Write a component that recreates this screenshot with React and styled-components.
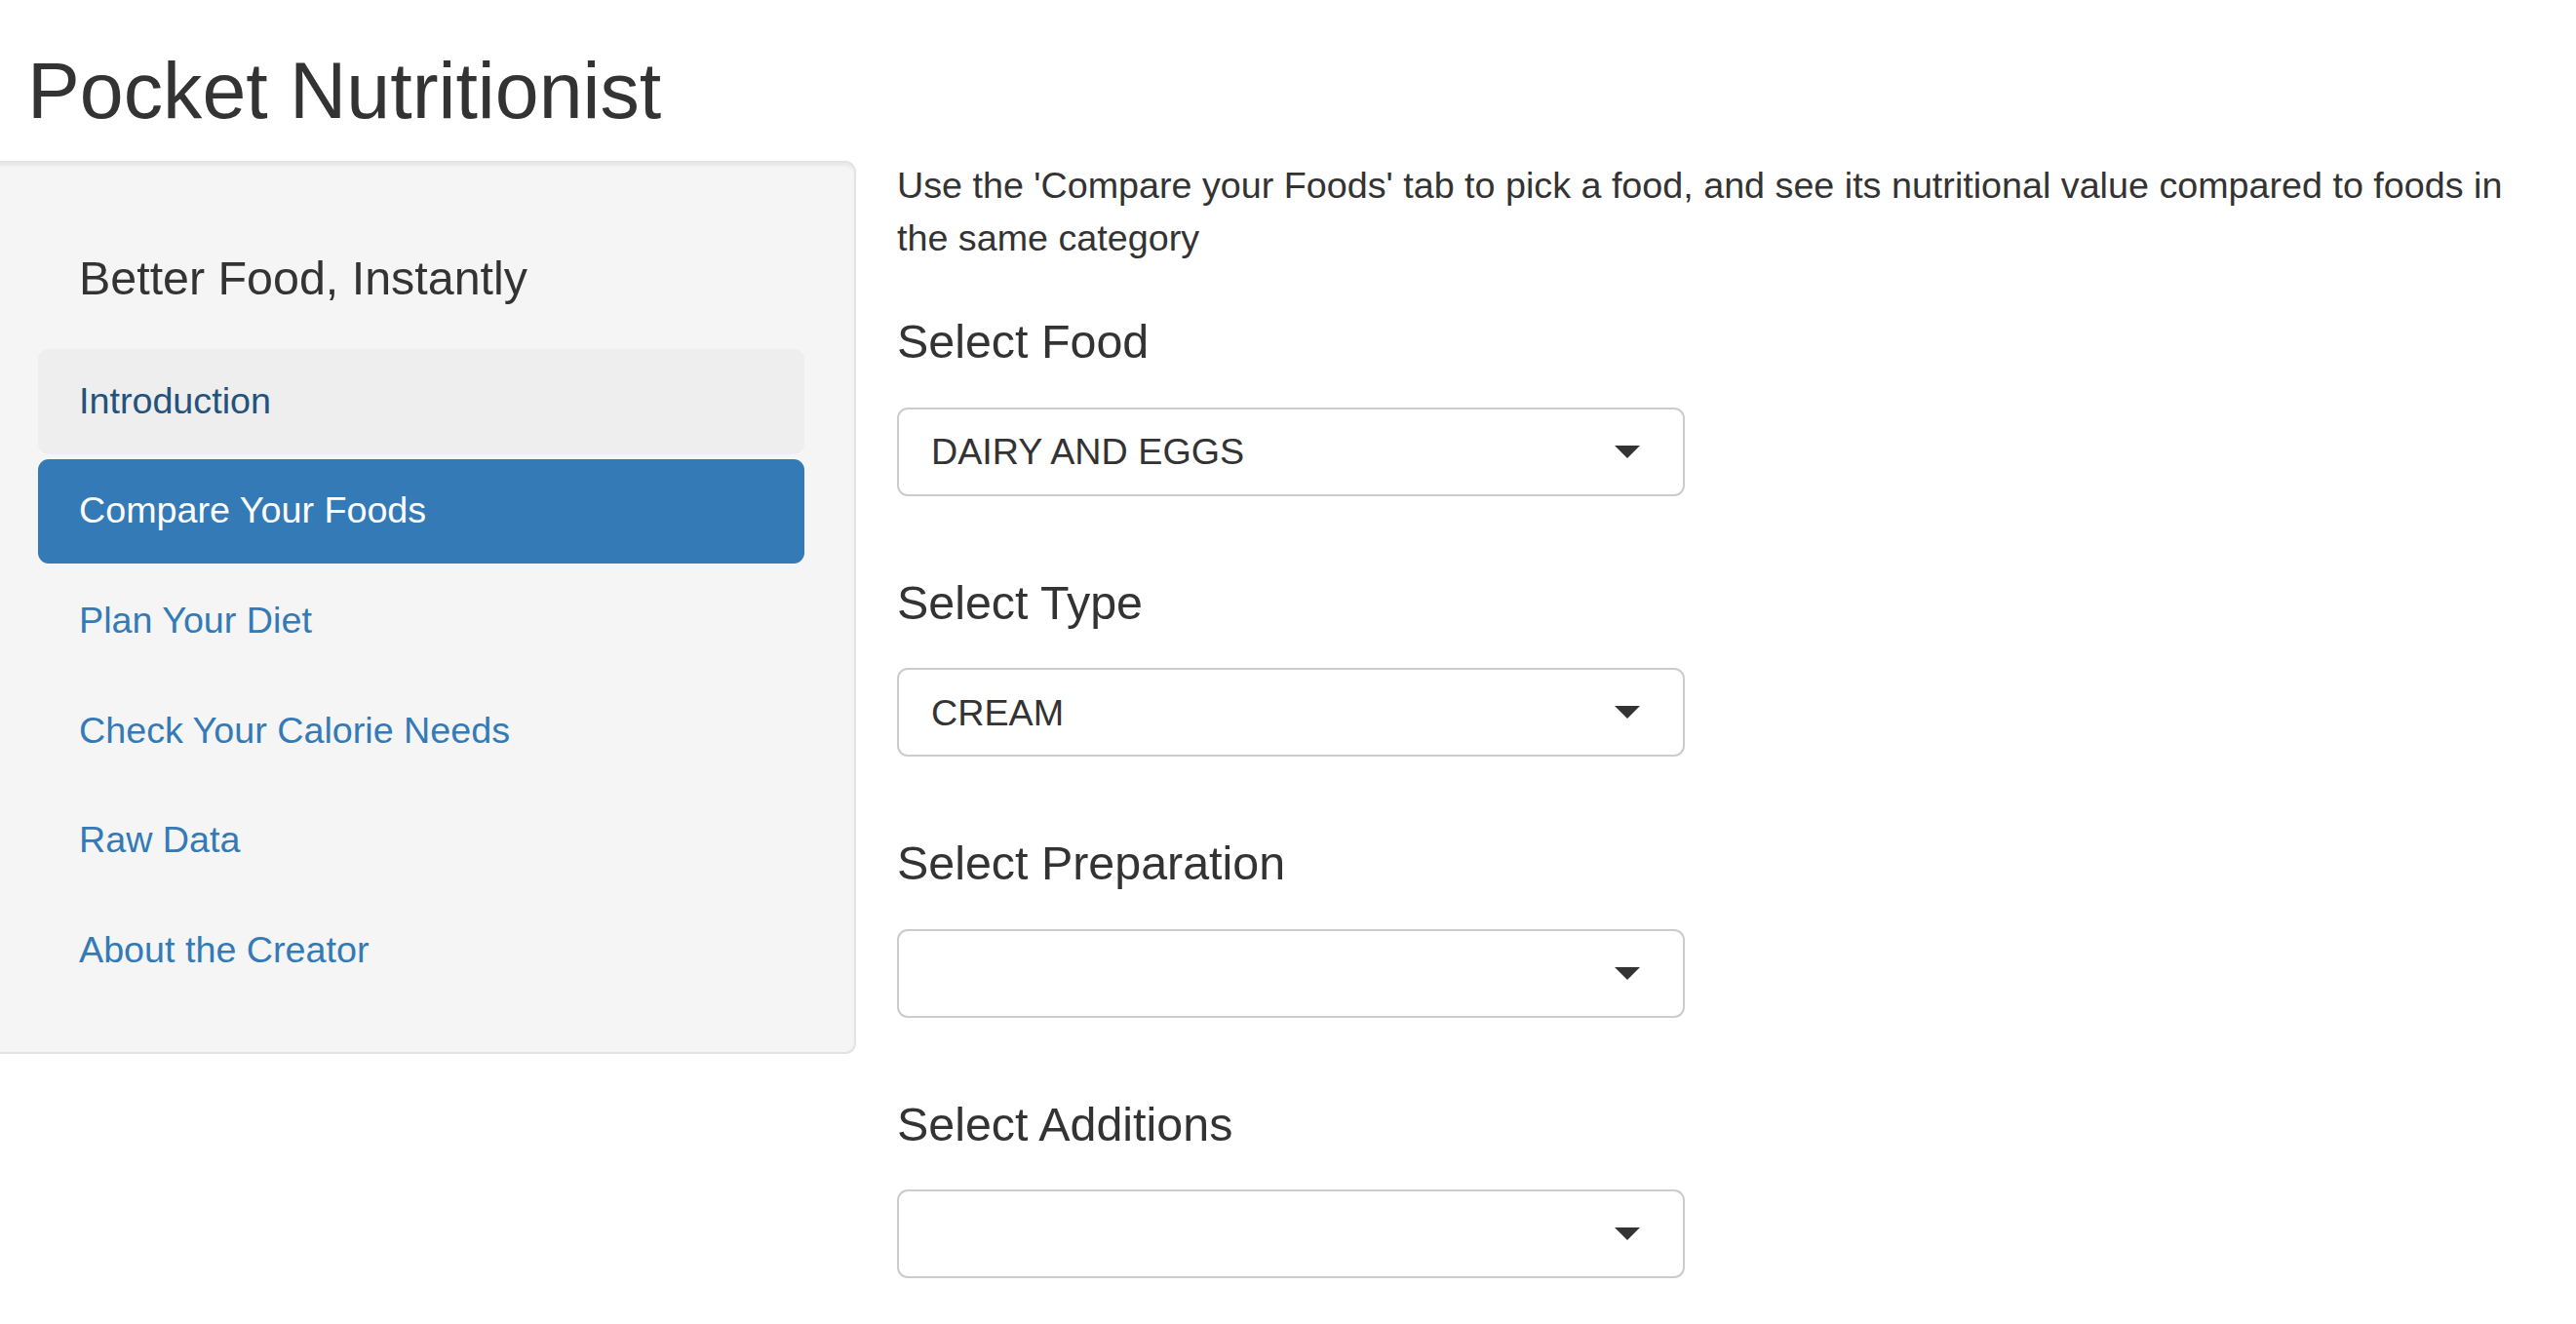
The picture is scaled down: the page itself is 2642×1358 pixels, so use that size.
import React from "react";
import styled, { createGlobalStyle } from "styled-components";

const GlobalStyle = createGlobalStyle`
  html, body {
    margin: 0;
    padding: 0;
    background: #fff;
    overflow: hidden;
  }
  body {
    font-family: "Liberation Sans", Arial, Helvetica, sans-serif;
    color: #333;
  }
  * { box-sizing: border-box; }
`;

const Page = styled.div`
  width: 2642px;
`;

const Title = styled.h2`
  margin: 0;
  padding: 49px 0 0 28px;
  font-size: 80.7px;
  line-height: 1.1;
  font-weight: 500;
`;

const Row = styled.div`
  display: flex;
  align-items: flex-start;
  margin-top: 27px;
`;

const Well = styled.div`
  margin-left: -14px;
  width: 892px;
  flex-shrink: 0;
  padding: 51px;
  background: #f5f5f5;
  border: 2.7px solid #e3e3e3;
  border-radius: 11px;
  box-shadow: inset 0 3px 3px rgba(0, 0, 0, 0.05);
`;

const Tagline = styled.h4`
  margin: 41px 0 46px;
  padding-left: 42px;
  font-size: 48.4px;
  line-height: 1.1;
  font-weight: 500;
`;

const Nav = styled.ul`
  list-style: none;
  margin: 0;
  padding: 0;
  display: flex;
  flex-direction: column;
  gap: 5px;
`;

const Pill = styled.li`
  padding: 26.9px 40px 26.9px 42px;
  font-size: 37.7px;
  line-height: 53.8px;
  border-radius: 11px;
  cursor: pointer;
  color: ${(p) => (p.$active ? "#fff" : p.$hover ? "#23527c" : "#337ab7")};
  background: ${(p) => (p.$active ? "#337ab7" : p.$hover ? "#eee" : "transparent")};
`;

const Main = styled.div`
  margin-left: 42px;
  margin-top: -2px;
  width: 1682px;
  display: flex;
  flex-direction: column;
`;

const Intro = styled.p`
  margin: 0 0 53.6px;
  font-size: 37.7px;
  line-height: 54px;
`;

const Group = styled.div`
  display: flex;
  flex-direction: column;
  & + & {
    margin-top: 83px;
  }
`;

const Label = styled.label`
  display: block;
  font-size: 48.4px;
  line-height: 1.1;
  font-weight: 500;
  margin-bottom: 40.2px;
`;

const SelectBox = styled.div`
  width: 808px;
  height: 91px;
  border: 2.7px solid #ccc;
  border-radius: 11px;
  background: #fff;
  display: flex;
  align-items: center;
  justify-content: space-between;
  padding: 0 44px 0 33px;
  font-size: 37.7px;
  line-height: 54px;
  color: #333;
`;

const Caret = styled.span`
  width: 0;
  height: 0;
  border-style: solid;
  border-width: 13.5px 13.5px 0 13.5px;
  border-color: #333 transparent transparent transparent;
`;

const tabs = [
  { name: "Introduction", hover: true },
  { name: "Compare Your Foods", active: true },
  { name: "Plan Your Diet" },
  { name: "Check Your Calorie Needs" },
  { name: "Raw Data" },
  { name: "About the Creator" },
];

const selects = [
  { label: "Select Food", value: "DAIRY AND EGGS" },
  { label: "Select Type", value: "CREAM" },
  { label: "Select Preparation", value: "" },
  { label: "Select Additions", value: "" },
];

export default function App() {
  return (
    <Page>
      <GlobalStyle />
      <Title>Pocket Nutritionist</Title>
      <Row>
        <Well>
          <Tagline>Better Food, Instantly</Tagline>
          <Nav>
            {tabs.map((t) => (
              <Pill key={t.name} $active={t.active} $hover={t.hover}>
                {t.name}
              </Pill>
            ))}
          </Nav>
        </Well>
        <Main>
          <Intro>
            Use the 'Compare your Foods' tab to pick a food, and see its nutritional value
            compared to foods in the same category
          </Intro>
          {selects.map((s) => (
            <Group key={s.label}>
              <Label>{s.label}</Label>
              <SelectBox>
                <span>{s.value}</span>
                <Caret />
              </SelectBox>
            </Group>
          ))}
        </Main>
      </Row>
    </Page>
  );
}
